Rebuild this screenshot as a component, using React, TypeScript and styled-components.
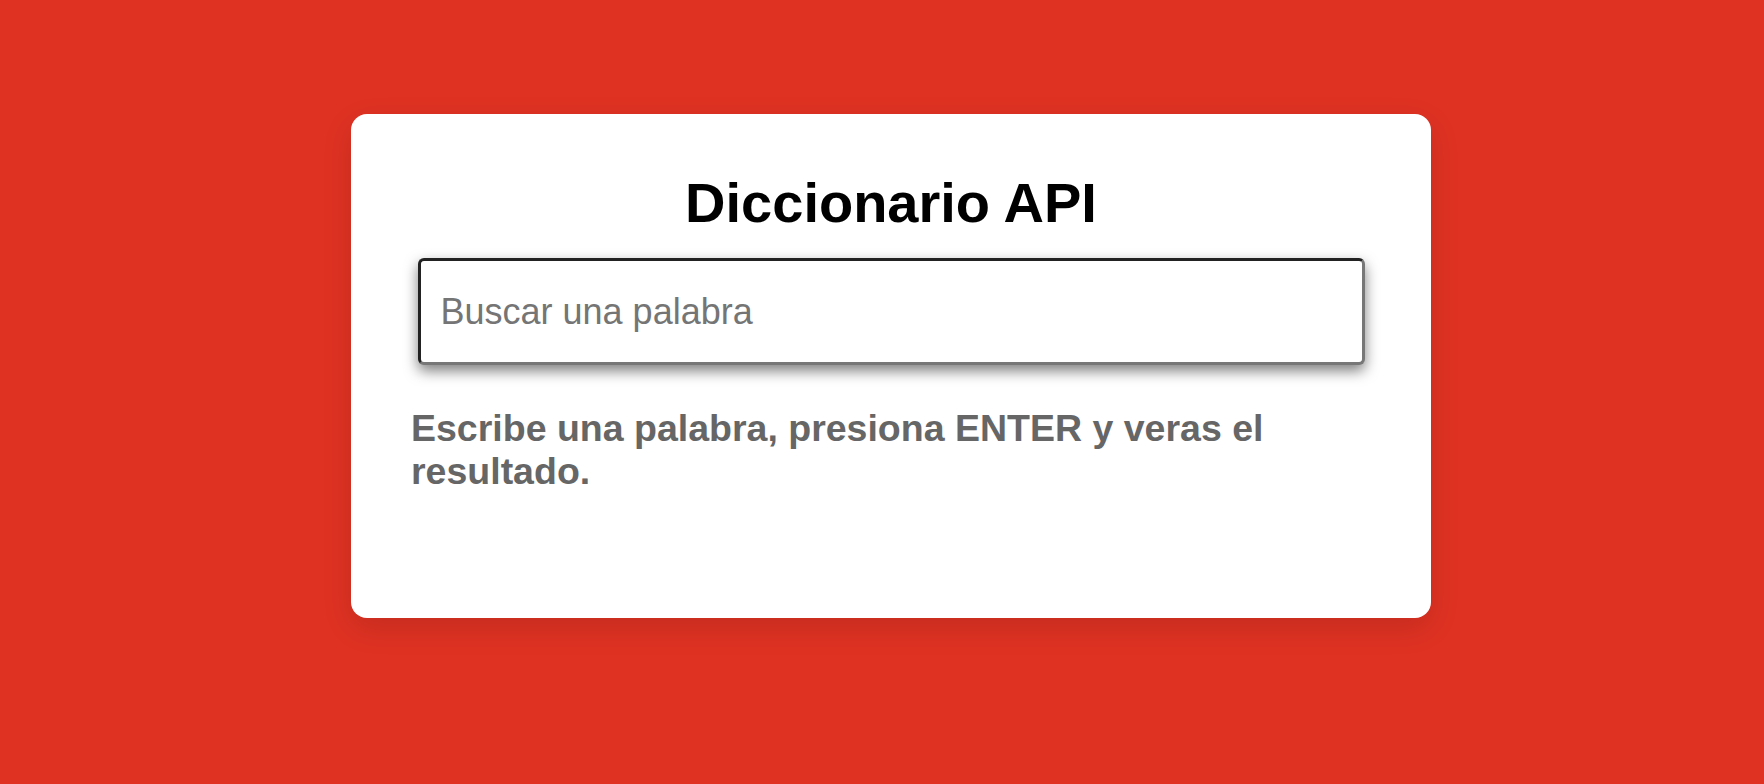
import React, { useState } from 'react'
import styled, { createGlobalStyle } from 'styled-components'

const GlobalStyle = createGlobalStyle`
  html, body {
    margin: 0;
    padding: 0;
    background: #df3223;
    font-family: "Liberation Sans", Arial, Helvetica, sans-serif;
  }
`

const Page = styled.main`
  min-height: 784px;
  box-sizing: border-box;
  padding: 114px 0 0 18px;
  display: flex;
  justify-content: center;
  align-items: flex-start;
`

const Card = styled.section`
  width: 1080px;
  height: 504px;
  box-sizing: border-box;
  padding: 57px 60px 0;
  background: #fff;
  border-radius: 16px;
  box-shadow: 0 10px 30px rgba(0, 0, 0, 0.12);
  display: flex;
  flex-direction: column;
`

const Title = styled.h1`
  margin: 0;
  font-size: 56px;
  line-height: 64px;
  font-weight: 700;
  color: #000;
  text-align: center;
`

const SearchInput = styled.input`
  display: block;
  width: 947px;
  height: 107px;
  box-sizing: border-box;
  margin: 23px auto 0;
  padding: 0 20px;
  font-family: "Liberation Sans", Arial, Helvetica, sans-serif;
  font-size: 36px;
  color: #222;
  background: #fff;
  border: 3px solid;
  border-color: #222 #777 #777 #222;
  border-radius: 6px;
  box-shadow: 0 6px 14px rgba(0, 0, 0, 0.5);
  outline: none;

  &::placeholder {
    color: #757575;
  }
`

const Hint = styled.p`
  margin: 42px 0 0;
  font-size: 37.5px;
  line-height: 43px;
  font-weight: 700;
  color: #666;
`

const App = () => {
  const [word, setWord] = useState('')

  return (
    <>
      <GlobalStyle />
      <Page>
        <Card>
          <Title>Diccionario API</Title>
          <SearchInput
            type="text"
            placeholder="Buscar una palabra"
            value={word}
            onChange={(e) => setWord(e.target.value)}
          />
          <Hint>Escribe una palabra, presiona ENTER y veras el resultado.</Hint>
        </Card>
      </Page>
    </>
  )
}

export default App
